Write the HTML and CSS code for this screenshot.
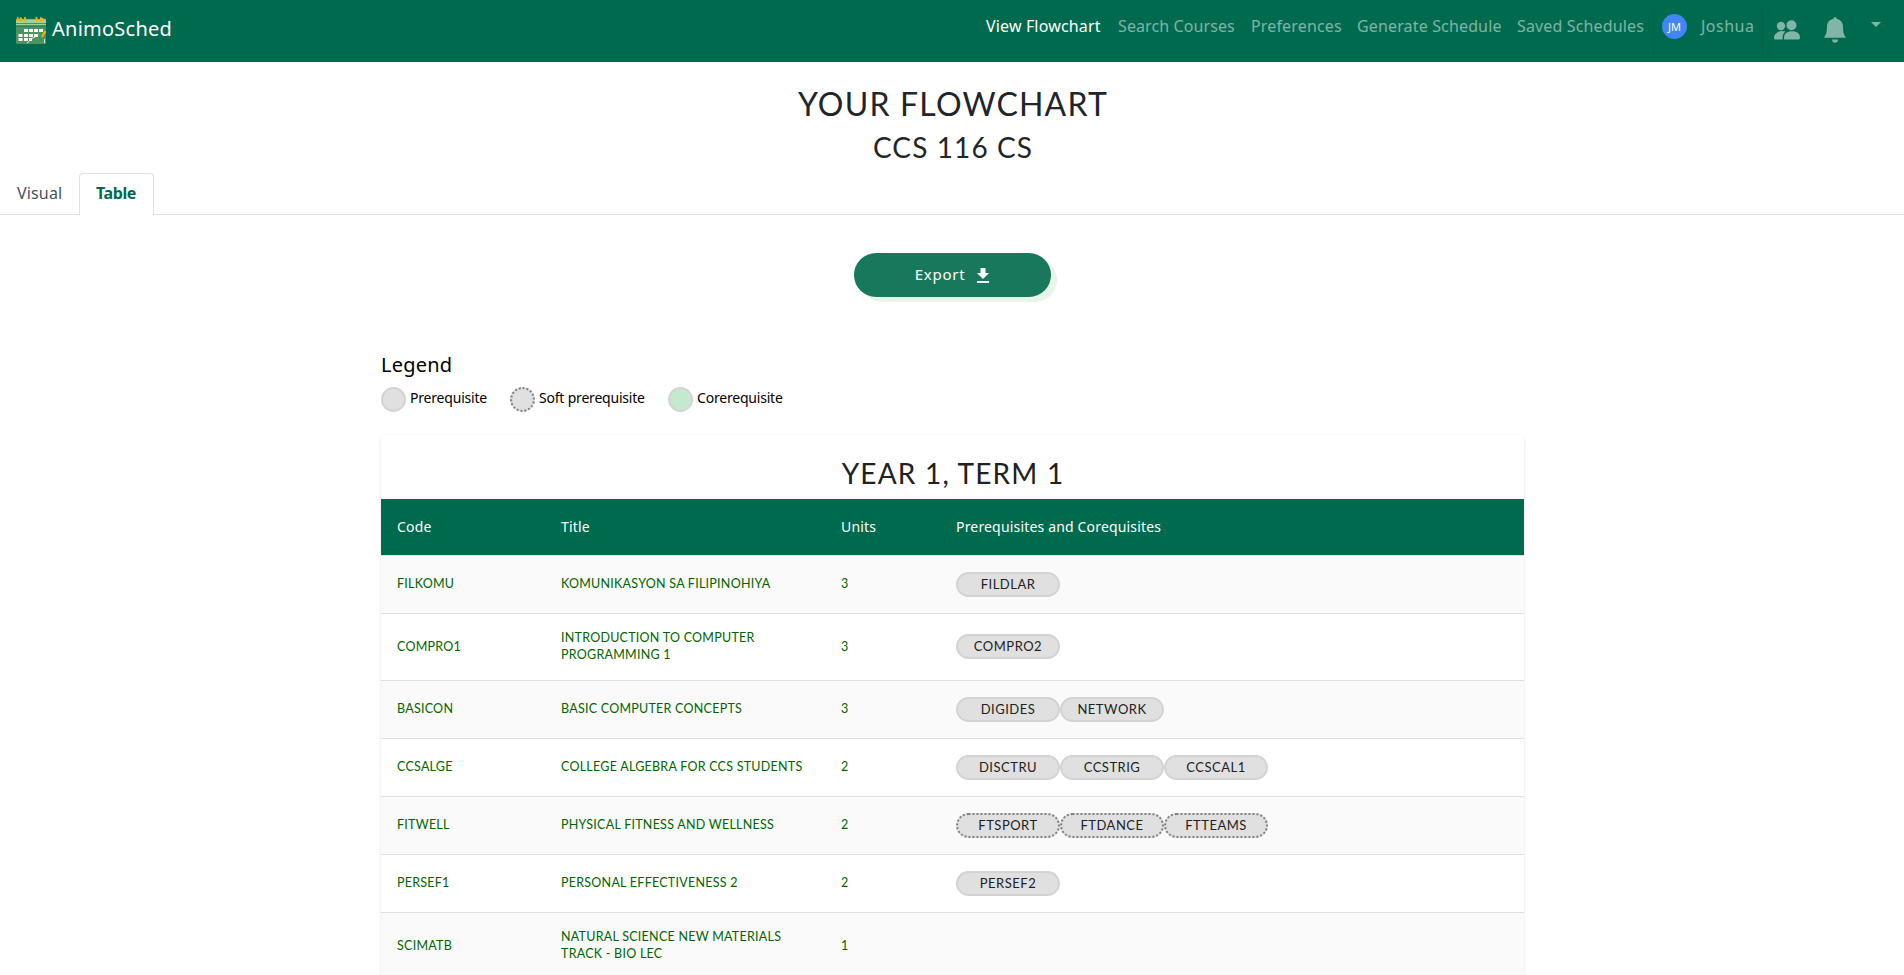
FILE: index.html
```html
<!DOCTYPE html>
<html lang="en">
<head>
<meta charset="utf-8">
<title>AnimoSched</title>
<link rel="stylesheet" href="styles.css">
</head>
<body>
<nav class="navbar">
  <a class="brand">
    <svg class="brand-logo" viewBox="0 0 30 27" width="30" height="27">
      <rect y="2" width="30" height="25" rx="1" fill="#4b9460"/>
      <rect y="2.5" width="30" height="6" fill="#a5d09a"/>
      <rect y="6" width="30" height="1" fill="#4b9460"/>
      <rect y="8.5" width="30" height="1" fill="#1a7050"/>
      <path d="M5 2.5h20" stroke="#c9a32a" stroke-width="1.2"/>
      <path d="M1 .5 3 2.5 1 4.5M4 .5 6 2.5 4 4.5M9 0v5M20.500 0v5" fill="none" stroke="#f5b301" stroke-width="1.7"/>
      <path d="M24 0l6 2.500-6 2.500z" fill="#f5b301"/>
      <path d="M8 12h4v3H8zM13 12h4v3h-4zM18 12h4v3h-4zM23 12h4v3h-4zM2.500 17h4v3h-4zM8 17h4v3H8zM13 17h4v3h-4zM18 17h4v3h-4zM2.500 21h4v3h-4zM8 21h4v3H8zM13 21h3v3h-3z" fill="#fff"/>
      <path d="M15 27c3-5 6-6.500 12-6.500l-1 3 2 1v2.500z" fill="#4b9460"/>
      <path d="M11 26.500c3-4 6-6 9-7M28.500 22v4" fill="none" stroke="#dceede" stroke-width="1"/>
      <path d="M26 20l3.500-6" stroke="#f5b301" stroke-width="2"/>
    </svg>
    <span class="brand-name">AnimoSched</span>
  </a>
  <div class="nav-links">
    <a class="nav-link nav-flowchart active">View Flowchart</a>
    <a class="nav-link nav-search">Search Courses</a>
    <a class="nav-link nav-preferences">Preferences</a>
    <a class="nav-link nav-generate">Generate Schedule</a>
    <a class="nav-link nav-saved">Saved Schedules</a>
    <div class="account"><span class="avatar">JM</span><a class="nav-link nav-user">Joshua</a></div>
    <svg class="friends" viewBox="0 0 26 20" width="26" height="20" fill="currentColor">
      <circle cx="17.500" cy="5.200" r="5"/><circle cx="7" cy="6" r="4.200"/>
      <path d="M10 19.500V17.500C10 14 13 11.300 18 11.300s8 2.700 8 6.200q0 2-1.500 2h-13Q10 19.500 10 19.500z"/>
      <path d="M11.500 11.600C9.500 13 8.600 15 8.600 17.500v2H1.500Q0 19.500 0 18c0-3.800 3.500-7 8-7q2 0 3.500.6z"/>
    </svg>
    <svg class="bell" viewBox="0 0 22 26" width="22" height="26" fill="currentColor">
      <path d="M11 0c1 0 1.500.8 1.500 1.700C16.500 2.500 19 5.500 19 9.500c0 6.500 1.500 9 3 11.200H0C1.500 18.500 3 16 3 9.500c0-4 2.500-7 6.500-7.800C9.500.8 10 0 11 0zM8 22.500h6c0 2-1.300 3.300-3 3.300s-3-1.300-3-3.300z"/>
    </svg>
    <svg class="caret" viewBox="0 0 10 5" width="10" height="5" fill="currentColor"><path d="M0 0h10L5 5z"/></svg>
  </div>
</nav>
<main>
  <header class="page-head">
    <h1 class="page-title">YOUR FLOWCHART</h1>
    <h2 class="page-subtitle">CCS 116 CS</h2>
  </header>
  <div class="tabs">
    <a class="tab"><span class="tab-visual">Visual</span></a>
    <a class="tab selected"><span class="tab-table">Table</span></a>
  </div>
  <div class="actions">
    <button class="export"><span class="export-label">Export</span>
      <svg viewBox="0 0 12 15" width="12" height="15" fill="currentColor"><path d="M3.500 0h5v5H12L6 11 0 5h3.500zM0 13h12v2H0z"/></svg>
    </button>
  </div>
  <section class="content">
    <h3 class="legend-title">Legend</h3>
    <div class="legend">
      <span class="dot"></span><span class="legend-text lt-pre">Prerequisite</span>
      <span class="dot soft"></span><span class="legend-text lt-soft">Soft prerequisite</span>
      <span class="dot co"></span><span class="legend-text lt-co">Corerequisite</span>
    </div>
    <div class="card">
      <h2 class="term">YEAR 1, TERM 1</h2>
      <div class="row head"><span>Code</span><span>Title</span><span>Units</span><span class="head-req">Prerequisites and Corequisites</span></div>
      <div class="row odd"><span>FILKOMU</span><span>KOMUNIKASYON SA FILIPINOHIYA</span><span>3</span><div class="pills"><span class="pill">FILDLAR</span></div></div>
      <div class="row tall"><span>COMPRO1</span><span>INTRODUCTION TO COMPUTER<br>PROGRAMMING 1</span><span>3</span><div class="pills"><span class="pill">COMPRO2</span></div></div>
      <div class="row odd"><span>BASICON</span><span>BASIC COMPUTER CONCEPTS</span><span>3</span><div class="pills"><span class="pill">DIGIDES</span><span class="pill">NETWORK</span></div></div>
      <div class="row"><span>CCSALGE</span><span>COLLEGE ALGEBRA FOR CCS STUDENTS</span><span>2</span><div class="pills"><span class="pill">DISCTRU</span><span class="pill">CCSTRIG</span><span class="pill">CCSCAL1</span></div></div>
      <div class="row odd"><span>FITWELL</span><span>PHYSICAL FITNESS AND WELLNESS</span><span>2</span><div class="pills"><span class="pill soft">FTSPORT</span><span class="pill soft">FTDANCE</span><span class="pill soft">FTTEAMS</span></div></div>
      <div class="row"><span>PERSEF1</span><span>PERSONAL EFFECTIVENESS 2</span><span>2</span><div class="pills"><span class="pill">PERSEF2</span></div></div>
      <div class="row odd tall"><span>SCIMATB</span><span>NATURAL SCIENCE NEW MATERIALS<br>TRACK - BIO LEC</span><span>1</span><div class="pills"></div></div>
    </div>
  </section>
</main>
</body>
</html>
```
FILE: styles.css
```css
* { box-sizing: border-box; }
body {
  margin: 0;
  height: 975px;
  overflow: hidden;
  background: #fff;
  color: #212529;
  font-family: "Noto Sans", "Open Sans", sans-serif;
  font-size: 16px;
  line-height: 24px;
}
h1, h2, h3 { margin: 0; font-weight: 400; }
svg { display: block; flex: none; }

.navbar {
  display: flex;
  justify-content: space-between;
  height: 62px;
  background: #006a4e;
  border-bottom: 1px solid #066046;
}
.brand { display: flex; padding: 17px 0 0 16px; color: #fff; }
.brand-name { margin: 0 0 0 6px; font-size: 20px; letter-spacing: .25px; white-space: nowrap; }
.nav-links { display: flex; align-items: flex-start; padding-top: 6px; color: rgba(255, 255, 255, .5); }
.nav-link { padding-top: 8px; white-space: nowrap; letter-spacing: .15px; }
.nav-user { letter-spacing: .5px; }
.active { color: #fff; }
.nav-flowchart { width: 132px; }
.nav-search { width: 133px; letter-spacing: .1px; }
.nav-preferences { width: 106px; }
.nav-generate { width: 160px; }
.nav-saved { width: 136px; }
.account {
  display: flex;
  width: 110px;
  height: 48px;
  border: solid #086045;
  border-width: 0 1px;
  padding-left: 8px;
}
.avatar {
  width: 25px;
  height: 25px;
  margin: 8px 14px 0 0;
  border-radius: 50%;
  background: #4285f4;
  color: #fff;
  font-size: 11px;
  line-height: 25px;
  text-align: center;
}
.friends { margin: 14px 0 0 11px; }
.bell { margin: 11px 0 0 24px; }
.caret { margin: 16px 23px 0 25px; }

.page-head { height: 111px; padding: 22px 0 0 2px; font-family: Lato, sans-serif; text-align: center; }
.page-title { font-size: 32px; line-height: 40px; letter-spacing: 1.2px; }
.page-subtitle { margin-top: 5px; font-size: 28px; line-height: 36px; letter-spacing: 1.1px; }
.tabs { display: flex; height: 42px; border-bottom: 1px solid #dee2e6; }
.tab { height: 42px; padding: 8px 17px; width: 79px; color: #495057; letter-spacing: .15px; }
.tab.selected {
  width: 75px;
  padding: 7px 16px;
  border: 1px solid #dee2e6;
  border-bottom: 0;
  border-radius: 4px 4px 0 0;
  background: #fff;
  color: #006a4e;
  font-weight: 700;
  letter-spacing: -.4px;
}
.actions { display: flex; justify-content: center; padding-top: 38px; }
.export {
  display: flex;
  align-items: center;
  justify-content: center;
  gap: 12px;
  width: 197px;
  height: 44px;
  border: 0;
  border-radius: 22px;
  background: #17785c;
  box-shadow: 6px 5px 0 #e8f5e9;
  color: #fff;
  font: 15px/24px "Noto Sans", "Open Sans", sans-serif;
}
.export-label { letter-spacing: .75px; margin-top: -2px; }

.content { width: 1143px; margin: 55px auto 0 381px; color: #000; }
.legend-title { font-size: 20px; line-height: 25px; letter-spacing: .2px; }
.legend { display: flex; height: 25px; margin-top: 10px; font-size: 14px; line-height: 22px; }
.dot { width: 25px; height: 25px; border: 2px solid #d3d3d3; border-radius: 50%; background: #e0e0e0; }
.dot.co { background: #c5e9cf; }
.dot.soft { border: 2px dotted gray; }
.legend-text { padding-left: 4px; letter-spacing: -.2px; white-space: nowrap; }
.lt-pre { width: 104px; }
.lt-soft { width: 133px; }

.card {
  margin-top: 23px;
  border-radius: 4px;
  box-shadow: 0 1px 3px rgba(0, 0, 0, .12);
}
.term { height: 64px; padding: 20px 0 0 1px; color: #212121; font: 28px/36px Lato, sans-serif; letter-spacing: 1.2px; text-align: center; }
.row {
  display: grid;
  grid-template-columns: 164px 280px 115px 1fr;
  align-items: center;
  height: 58px;
  padding: 0 0 1px 16px;
  border-top: 1px solid #e0e0e0;
  background: #fff;
  color: #006400;
  font-family: Lato, sans-serif;
  font-size: 12.5px;
  line-height: 17px;
  letter-spacing: .25px;
}
.row > span { padding-bottom: 1px; }
.row.odd { background: #fafafa; }
.row.tall { height: 67px; padding-bottom: 1px; }
.row.head { height: 56px; border: 0; background: #006a4e; color: #fff; font-family: "Noto Sans", sans-serif; font-size: 14px; letter-spacing: .17px; }
.row.head > span { padding-bottom: 0; }
.pills { display: flex; }
.pill {
  width: 104px;
  height: 25px;
  border: 2px solid #d3d3d3;
  border-radius: 12.5px;
  background: #e0e0e0;
  color: #212121;
  font-size: 13px;
  line-height: 20px;
  letter-spacing: .5px;
  text-align: center;
}
.pill.soft { border: 2px dotted gray; }
```
